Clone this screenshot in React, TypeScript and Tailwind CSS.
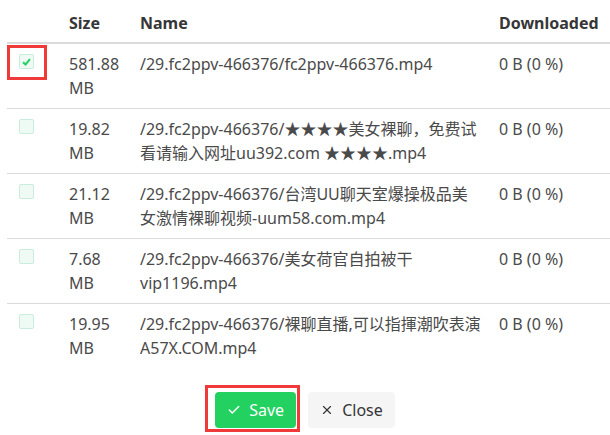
import { Check, X } from "lucide-react";

const FILES = [
  { size: "581.88", name: "/29.fc2ppv-466376/fc2ppv-466376.mp4", checked: true },
  { size: "19.82", name: "/29.fc2ppv-466376/★★★★美女裸聊，免费试看请输入网址uu392.com ★★★★.mp4" },
  { size: "21.12", name: "/29.fc2ppv-466376/台湾UU聊天室爆操极品美女激情裸聊视频-uum58.com.mp4" },
  { size: "7.68", name: "/29.fc2ppv-466376/美女荷官自拍被干vip1196.mp4" },
  { size: "19.95", name: "/29.fc2ppv-466376/裸聊直播,可以指揮潮吹表演A57X.COM.mp4" },
];

function Box({ checked }: { checked?: boolean }) {
  return (
    <span className="flex h-[15px] w-[15px] items-center justify-center rounded-[2px] border border-[#c9ecdd] bg-[#effaf5]">
      {checked && (
        <svg width="9" height="8" viewBox="0 0 9 8">
          <path d="M1 4.2 L3.5 6.5 L8 1.2" fill="none" stroke="#23d160" strokeWidth="2" />
        </svg>
      )}
    </span>
  );
}

export default function App() {
  return (
    <div
      className="h-[435px] w-[610px] overflow-hidden bg-white pl-[7px] text-[16px] leading-6 text-[#4a4a4a]"
      style={{ fontFamily: '"Noto Sans", "Noto Sans CJK SC", sans-serif' }}
    >
      <table className="w-[603px] table-fixed border-collapse">
        <colgroup>
          <col className="w-[50px]" />
          <col className="w-[71px]" />
          <col className="w-[359px]" />
          <col />
        </colgroup>
        <thead>
          <tr className="border-b-2 border-[#dbdbdb] text-left font-bold text-[#363636]">
            <th className="px-3 pb-[7px] pt-[11px]" />
            <th className="px-3 pb-[7px] pt-[11px]">Size</th>
            <th className="px-3 pb-[7px] pt-[11px]">Name</th>
            <th className="px-3 pb-[7px] pt-[11px]">Downloaded</th>
          </tr>
        </thead>
        <tbody>
          {FILES.map((f, i) => (
            <tr key={i} className="border-b border-[#dbdbdb] align-top last:border-b-0">
              <td className="relative px-3 py-2">
                <div className="pt-[2px]">
                  <Box checked={f.checked} />
                </div>
                {f.checked && (
                  <div className="absolute left-0 top-[1px] h-[35px] w-[40px] border-[3px] border-[#f03a3a]" />
                )}
              </td>
              <td className="px-3 py-2">
                {f.size}
                <br />
                MB
              </td>
              <td className="py-2 pl-3 pr-1 break-words">{f.name}</td>
              <td className="px-3 py-2">0 B (0 %)</td>
            </tr>
          ))}
        </tbody>
      </table>
      <div className="mt-6 flex justify-center gap-3 pr-[7px]">
        <div className="relative">
          <button className="flex h-9 items-center gap-2 rounded bg-[#23d160] px-3 text-white">
            <Check size={14} strokeWidth={2.5} />
            Save
          </button>
          <div className="absolute -left-[10px] -top-[7px] h-[47px] w-[95px] border-[3px] border-[#f03a3a]" />
        </div>
        <button className="flex h-9 items-center gap-2 rounded bg-[#f5f5f5] px-3 text-[#363636]">
          <X size={14} strokeWidth={2} />
          Close
        </button>
      </div>
    </div>
  );
}
